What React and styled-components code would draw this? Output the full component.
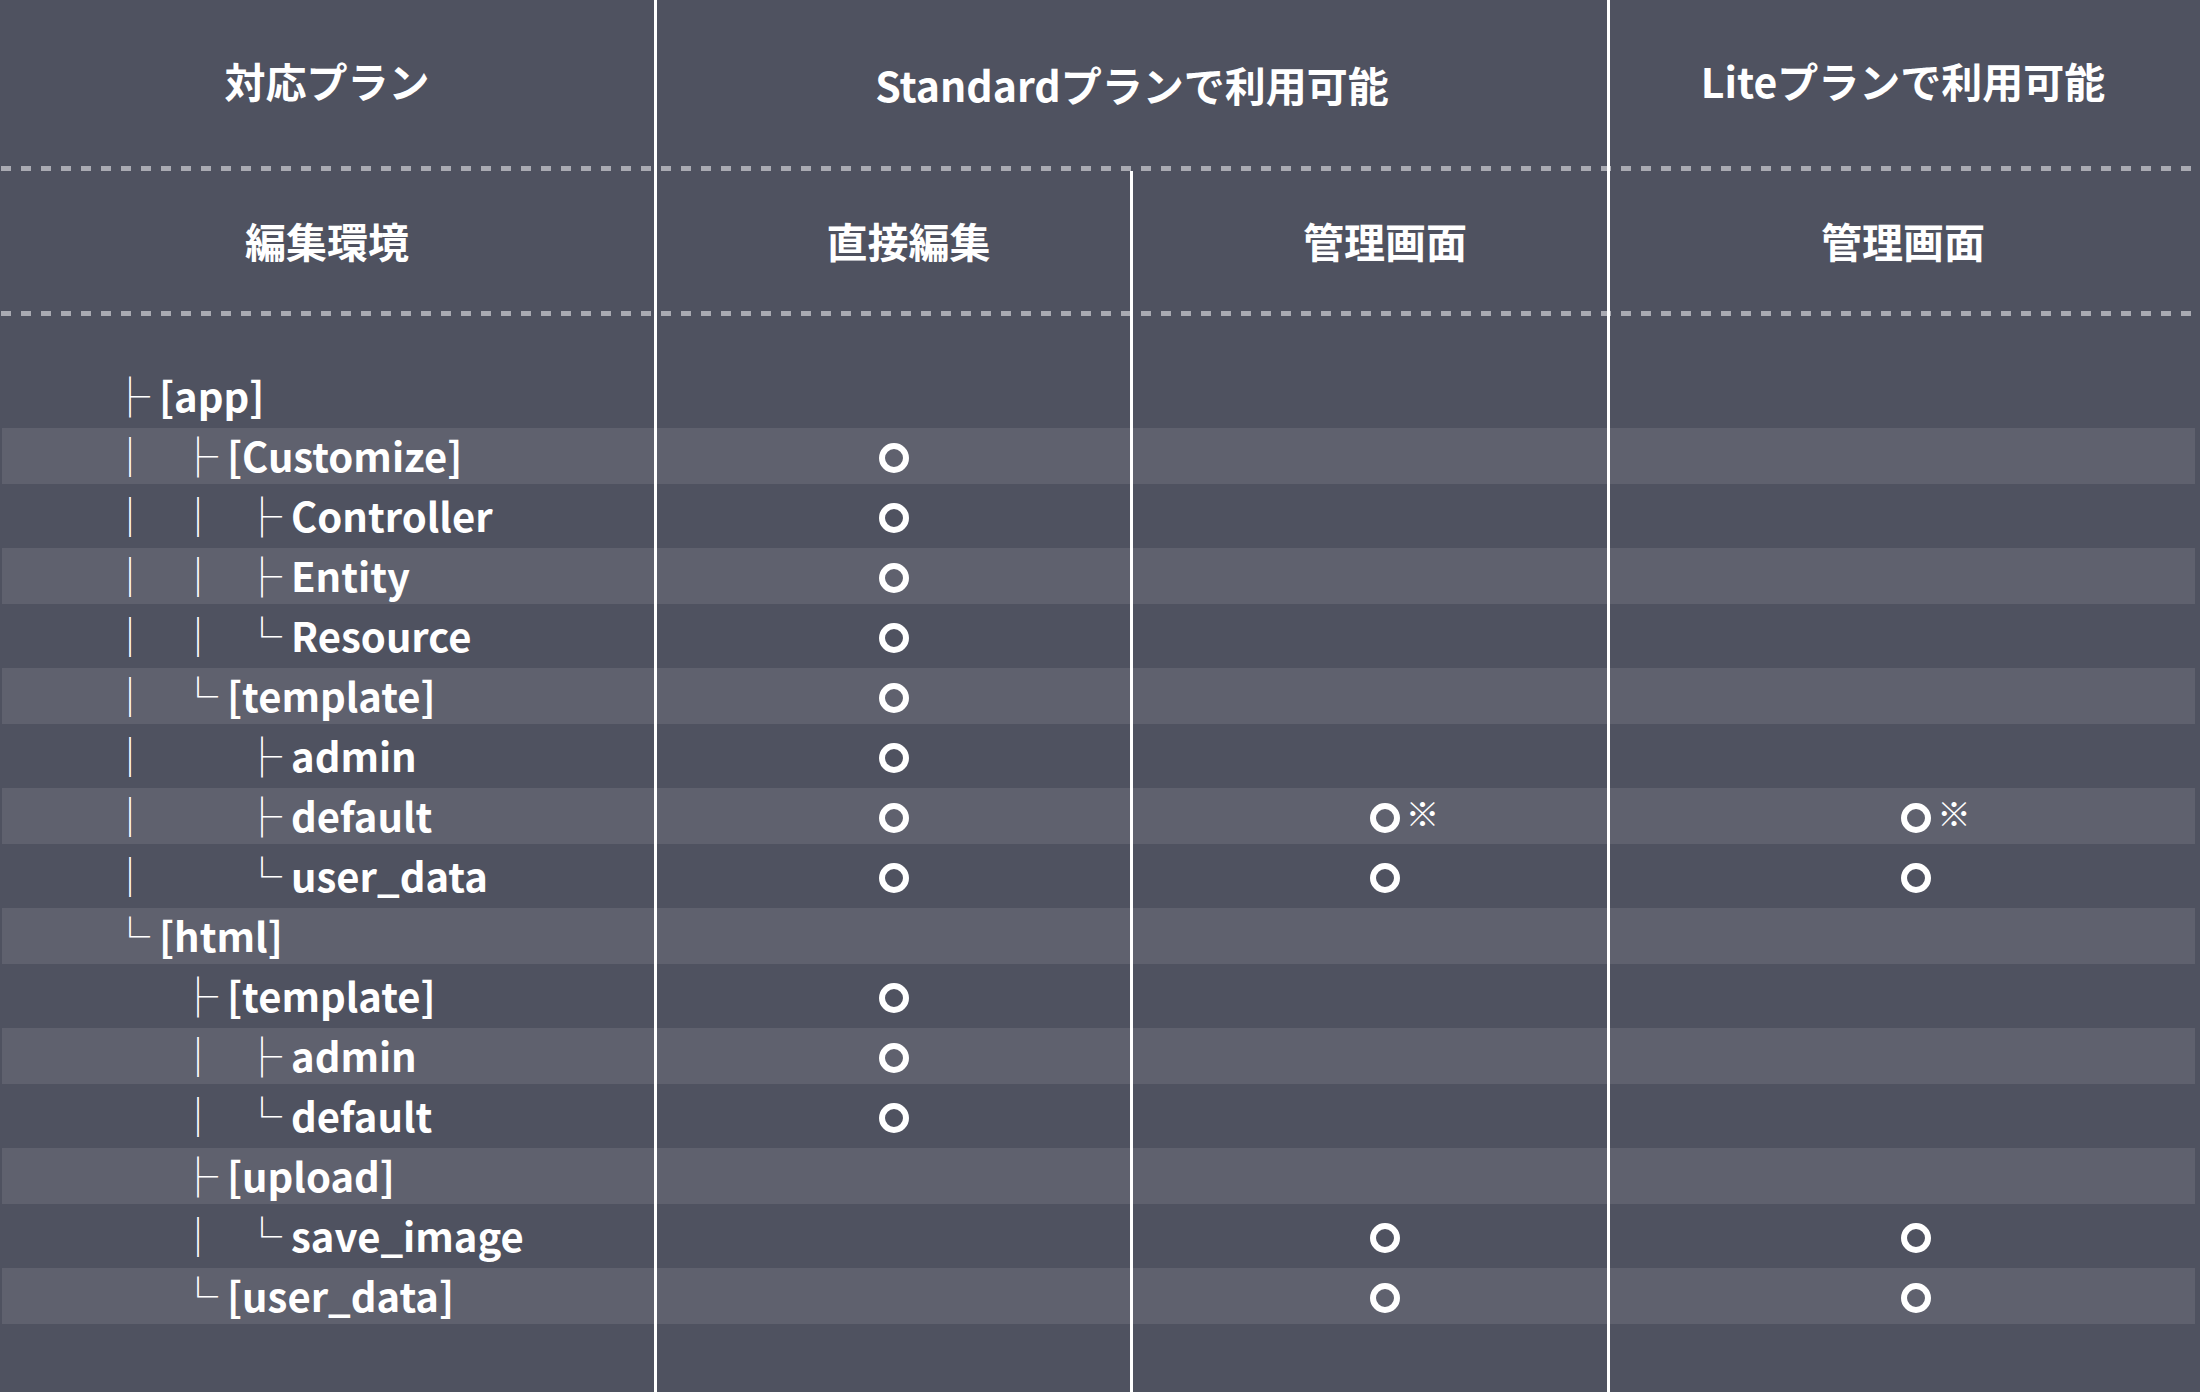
import React from "react";
import styled, { createGlobalStyle } from "styled-components";

const BG = "#4f5260";
const STRIPE = "#5f616e";
const DASH = "#a9aab2";
const COLS = "657px 476px 477px 586px";

const GlobalStyle = createGlobalStyle`
  html, body {
    margin: 0;
    padding: 0;
    background: ${BG};
  }
  body {
    font-family: "Noto Sans CJK JP", "Noto Sans", sans-serif;
    color: #fff;
  }
`;

const Table = styled.div`
  width: 2196px;
  display: flex;
  flex-direction: column;
`;

const Row = styled.div`
  display: grid;
  grid-template-columns: ${COLS};
  height: ${(p) => p.$h}px;
  background: ${(p) =>
    p.$striped
      ? `linear-gradient(${STRIPE}, ${STRIPE}) 2px 2px / calc(100% - 3px) 56px no-repeat`
      : "none"};
`;

const Cell = styled.div`
  box-sizing: border-box;
  min-width: 0;
  border-right: ${(p) => (p.$last ? "none" : "3px solid #fff")};
  ${(p) => p.$span && `grid-column: span ${p.$span};`}
`;

const HeadCell = styled(Cell)`
  display: flex;
  align-items: center;
  justify-content: center;
  padding-bottom: ${(p) => p.$pb}px;
  padding-left: ${(p) => p.$pl || 0}px;
  font-size: 41px;
  font-weight: 700;
  white-space: nowrap;
  background: linear-gradient(to right, ${DASH} 10px, transparent 10px)
    ${(p) => p.$dash}px 100% / 20px 5px repeat-x;
`;

const TreeCell = styled(Cell)`
  display: flex;
  align-items: center;
  padding: 0 0 11px 110px;
`;

const Slot = styled.span`
  flex: none;
  width: ${(p) => p.$w}px;
  font-size: 40px;
  font-weight: 400;
  white-space: pre;
`;

const Label = styled.span`
  font-size: 40px;
  font-weight: 700;
  white-space: nowrap;
`;

const MarkCell = styled(Cell)`
  display: flex;
  align-items: center;
  justify-content: ${(p) => (p.$center ? "center" : "flex-start")};
  padding-left: ${(p) => (p.$center ? "0" : "calc(50% - 2px)")};
  padding-bottom: 6px;
`;

const Circle = styled.span`
  flex: none;
  box-sizing: border-box;
  width: 30px;
  height: 30px;
  border: 6px solid #fff;
  border-radius: 50%;
`;

const Note = styled.span`
  font-size: 34px;
  font-weight: 400;
  line-height: 1.2;
  margin-left: 6px;
  margin-bottom: 8px;
`;

const GUIDE_W = [68, 64];

// guides: chars drawn before the connector, one per level
const rows = [
  { g: [], c: "├", label: "[app]" },
  { g: ["│"], c: "├", label: "[Customize]", m: ["o"] },
  { g: ["│", "│"], c: "├", label: "Controller", m: ["o"] },
  { g: ["│", "│"], c: "├", label: "Entity", m: ["o"] },
  { g: ["│", "│"], c: "└", label: "Resource", m: ["o"] },
  { g: ["│"], c: "└", label: "[template]", m: ["o"] },
  { g: ["│", ""], c: "├", label: "admin", m: ["o"] },
  { g: ["│", ""], c: "├", label: "default", m: ["o", "n", "n"] },
  { g: ["│", ""], c: "└", label: "user_data", m: ["o", "o", "o"] },
  { g: [], c: "└", label: "[html]" },
  { g: [""], c: "├", label: "[template]", m: ["o"] },
  { g: ["", "│"], c: "├", label: "admin", m: ["o"] },
  { g: ["", "│"], c: "└", label: "default", m: ["o"] },
  { g: [""], c: "├", label: "[upload]" },
  { g: ["", "│"], c: "└", label: "save_image", m: ["", "o", "o"] },
  { g: [""], c: "└", label: "[user_data]", m: ["", "o", "o"] },
];

const Mark = ({ v }) => {
  if (!v) return null;
  return (
    <>
      <Circle />
      {v === "n" && <Note>※</Note>}
    </>
  );
};

const TreeRow = ({ row, index }) => {
  const m = row.m || [];
  return (
    <Row $h={60} $striped={index % 2 === 1}>
      <TreeCell>
        {row.g.map((ch, i) => (
          <Slot key={i} $w={GUIDE_W[i]}>
            {ch}
          </Slot>
        ))}
        <Slot $w={49}>{row.c}</Slot>
        <Label>{row.label}</Label>
      </TreeCell>
      <MarkCell $center>
        <Mark v={m[0]} />
      </MarkCell>
      <MarkCell>
        <Mark v={m[1]} />
      </MarkCell>
      <MarkCell $last>
        <Mark v={m[2]} />
      </MarkCell>
    </Row>
  );
};

const Spacer = ({ h }) => (
  <Row $h={h}>
    <Cell />
    <Cell />
    <Cell />
    <Cell $last />
  </Row>
);

export default function App() {
  return (
    <>
      <GlobalStyle />
      <Table>
        <Row $h={171}>
          <HeadCell $pb={12} $dash={1}>
            対応プラン
          </HeadCell>
          <HeadCell $span={2} $pb={3} $dash={4}>
            Standardプランで利用可能
          </HeadCell>
          <HeadCell $last $pb={12} $dash={11}>
            Liteプランで利用可能
          </HeadCell>
        </Row>
        <Row $h={145}>
          <HeadCell $pb={8} $dash={1}>
            編集環境
          </HeadCell>
          <HeadCell $pb={8} $pl={30} $dash={4}>
            直接編集
          </HeadCell>
          <HeadCell $pb={8} $pl={30} $dash={8}>
            管理画面
          </HeadCell>
          <HeadCell $last $pb={8} $dash={11}>
            管理画面
          </HeadCell>
        </Row>
        <Spacer h={50} />
        {rows.map((r, i) => (
          <TreeRow key={i} row={r} index={i} />
        ))}
        <Spacer h={66} />
      </Table>
    </>
  );
}
